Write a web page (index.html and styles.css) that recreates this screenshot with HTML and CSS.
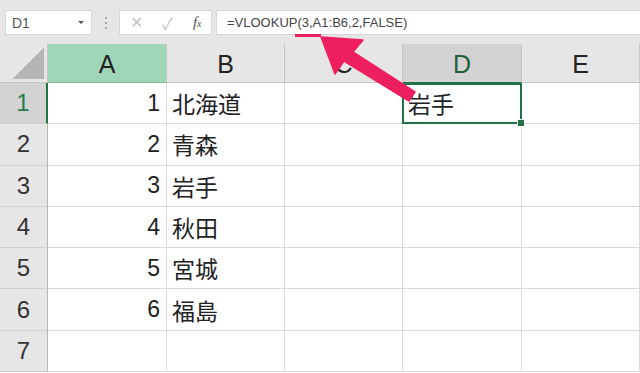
FILE: index.html
```html
<!DOCTYPE html>
<html lang="ja">
<head>
  <meta charset="UTF-8">
  <title>VLOOKUP</title>
  <link rel="stylesheet" href="styles.css">
</head>
<body>
  <div class="toolbar">
    <div class="namebox">
      <span>D1</span>
      <span class="caret"></span>
    </div>
    <div class="dots"><i></i><i></i><i></i></div>
    <div class="btns">
      <span class="btn-x">&#x2715;</span>
      <span class="btn-ok">&#x2713;</span>
      <span class="btn-fx"><i>f</i><small>x</small></span>
    </div>
    <div class="formula">=VLOOKUP(3,A1:B6,2,FALSE)</div>
  </div>

  <div class="sheet">
    <div class="corner"><span class="tri"></span></div>
    <div class="colhead sel-col">A</div>
    <div class="colhead">B</div>
    <div class="colhead">C</div>
    <div class="colhead active-col">D</div>
    <div class="colhead">E</div>

    <div class="rowhead active-row">1</div>
    <div class="cell num">1</div><div class="cell">北海道</div><div class="cell"></div><div class="cell selected">岩手</div><div class="cell"></div>

    <div class="rowhead">2</div>
    <div class="cell num">2</div><div class="cell">青森</div><div class="cell"></div><div class="cell"></div><div class="cell"></div>

    <div class="rowhead">3</div>
    <div class="cell num">3</div><div class="cell">岩手</div><div class="cell"></div><div class="cell"></div><div class="cell"></div>

    <div class="rowhead">4</div>
    <div class="cell num">4</div><div class="cell">秋田</div><div class="cell"></div><div class="cell"></div><div class="cell"></div>

    <div class="rowhead">5</div>
    <div class="cell num">5</div><div class="cell">宮城</div><div class="cell"></div><div class="cell"></div><div class="cell"></div>

    <div class="rowhead">6</div>
    <div class="cell num">6</div><div class="cell">福島</div><div class="cell"></div><div class="cell"></div><div class="cell"></div>

    <div class="rowhead">7</div>
    <div class="cell num"></div><div class="cell"></div><div class="cell"></div><div class="cell"></div><div class="cell"></div>
  </div>

  <!-- callout arrow pointing at the lookup value -->
  <svg class="arrow" width="640" height="373" viewBox="0 0 640 373">
    <rect x="295" y="34" width="26" height="3" fill="#ee1f5f"/>
    <polygon fill="#ee1f5f" stroke="#ee1f5f" stroke-width="1.5" stroke-linejoin="round"
      points="321,37 363,40 353,52 415,92 409,101 344,61 335,74"/>
  </svg>
</body>
</html>
```

FILE: styles.css
```css
* {
  box-sizing: border-box;
}

body {
  margin: 0;
  width: 640px;
  height: 373px;
  overflow: hidden;
  background: #fff;
  font-family: "Liberation Sans", "Noto Sans CJK JP", sans-serif;
  color: #222;
}

.toolbar {
  height: 44px;
  background: #e6e6e6;
  display: flex;
  align-items: center;
  padding-left: 5px;
  padding-top: 1px;
}

.namebox {
  width: 87px;
  height: 25px;
  background: #fff;
  border: 1px solid #d6d6d6;
  display: flex;
  align-items: center;
  justify-content: space-between;
  padding: 0 7px 0 6px;
  font-size: 14px;
  color: #555;
}

.caret {
  width: 0;
  height: 0;
  border-left: 3px solid transparent;
  border-right: 3px solid transparent;
  border-top: 3px solid #555;
}

.dots {
  width: 27px;
  display: flex;
  flex-direction: column;
  align-items: center;
  gap: 3px;
}

.dots i {
  width: 2px;
  height: 2px;
  background: #a8a8a8;
}

.btns {
  width: 93px;
  height: 25px;
  background: #fff;
  border: 1px solid #d6d6d6;
  display: flex;
  align-items: center;
  padding-left: 10px;
  gap: 19px;
  font-size: 16px;
  color: #c4c4c4;
}

.btn-fx {
  color: #555;
  font-family: "Liberation Serif", serif;
  font-size: 15px;
  margin-left: 1px;
}

.btn-fx small {
  font-size: 10px;
  font-style: italic;
}

.formula {
  flex: 1;
  margin-left: 4px;
  height: 25px;
  background: #fff;
  border: 1px solid #d6d6d6;
  border-right: 0;
  display: flex;
  align-items: center;
  padding-left: 10px;
  font-size: 13px;
  color: #444;
}

.sheet {
  display: grid;
  grid-template-columns: 48px 119px 118px 118px 119px 118px;
  grid-template-rows: 39px repeat(7, 41.3px);
}

.corner {
  background: #e6e6e6;
  border-right: 1px solid #c6c6c6;
  border-bottom: 1px solid #c6c6c6;
  display: flex;
  align-items: flex-end;
  justify-content: flex-end;
  padding: 0 3px 3px 0;
}

.tri {
  width: 31px;
  height: 31px;
  background: linear-gradient(to top left, #b5b5b5 50%, transparent 50%);
}

.colhead {
  background: #e6e6e6;
  border-right: 1px solid #c6c6c6;
  border-bottom: 1px solid #c6c6c6;
  display: flex;
  align-items: center;
  justify-content: center;
  font-size: 25px;
  color: #222;
  padding-top: 2px;
}

.sel-col {
  background: #a0d6b8;
  border-bottom-color: #86bc9e;
}

.active-col {
  background: #d3d3d3;
  color: #1f5f3a;
  border-bottom: 1px solid #217346;
}

.rowhead {
  background: #e6e6e6;
  border-right: 1px solid #b8b8b8;
  border-bottom: 1px solid #cfcfcf;
  display: flex;
  align-items: center;
  justify-content: center;
  font-size: 24px;
  color: #333;
}

.active-row {
  background: #d3d3d3;
  color: #2b7a4b;
  border-right: 2px solid #217346;
}

.cell {
  border-right: 1px solid #d9d9d9;
  border-bottom: 1px solid #d9d9d9;
  display: flex;
  align-items: center;
  padding: 0 6px 0 5px;
  font-size: 23px;
  color: #222;
}

.num {
  justify-content: flex-end;
}

.selected {
  position: relative;
}

.selected::after {
  content: "";
  position: absolute;
  left: -1px;
  top: 0;
  right: -1px;
  bottom: -1px;
  border: 2px solid #217346;
}

.selected::before {
  content: "";
  position: absolute;
  right: -4px;
  bottom: -4px;
  width: 6px;
  height: 6px;
  background: #217346;
  border: 1px solid #fff;
  z-index: 1;
}

.arrow {
  position: absolute;
  left: 0;
  top: 0;
  pointer-events: none;
}
```
